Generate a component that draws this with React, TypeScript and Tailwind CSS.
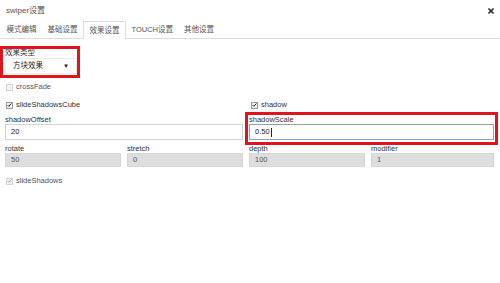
import React from 'react';

const font = { fontFamily: '"Liberation Sans", "Noto Sans CJK SC", Arial, sans-serif' };

const tabs = ['模式编辑', '基础设置', '效果设置', 'TOUCH设置', '其他设置'];

function Check({ checked, disabled, label }: { checked?: boolean; disabled?: boolean; label: string }) {
  return (
    <label className={`flex items-center gap-[3px] h-[10px] ${disabled ? 'text-[#555]' : 'text-[#333]'}`}>
      <span
        className={`w-[7px] h-[7px] border flex items-center justify-center ${
          disabled ? 'border-[#d4d4d4] bg-[#f2f2f2]' : 'border-[#999] bg-[#f4f4f4]'
        }`}
      >
        {checked && (
          <svg width="6" height="6" viewBox="0 0 6 6">
            <path d="M0.8 3.1 L2.3 4.6 L5.2 1.2" fill="none" stroke={disabled ? '#aaa' : '#222'} strokeWidth="1.2" />
          </svg>
        )}
      </span>
      <span>{label}</span>
    </label>
  );
}

function Field({ label, value, disabled, focus }: { label: string; value: string; disabled?: boolean; focus?: boolean }) {
  return (
    <div className="flex flex-col">
      <div className="h-[9px] leading-[9px] text-[#333]">{label}</div>
      <div
        className={`flex items-center px-[5px] border ${
          disabled
            ? 'h-[14px] bg-[#dedede] border-[#d6d6d6] text-[#555]'
            : focus
            ? 'h-[16px] bg-white border-[#8fa3b3] text-[#222]'
            : 'h-[16px] bg-white border-[#cfd4d8] text-[#222]'
        }`}
      >
        {value}
        {focus && <span className="w-px h-[9px] bg-[#222] ml-px" />}
      </div>
    </div>
  );
}

export default function App() {
  return (
    <div className="w-[500px] h-[283px] bg-white text-[7.5px] overflow-hidden" style={font}>
      {/* Title bar */}
      <div className="h-[21px] flex items-center justify-between pl-[6px] pr-[6px] text-[#555] text-[8px]">
        <span>swiper设置</span>
        <svg width="6" height="6" viewBox="0 0 6 6">
          <path d="M0.5 0.5 L5.5 5.5 M5.5 0.5 L0.5 5.5" stroke="#333" strokeWidth="1.6" />
        </svg>
      </div>

      {/* Tabs */}
      <div className="h-[18px] flex items-end pl-[1px] border-b border-[#dddddd]">
        {tabs.map((t, i) => (
          <div
            key={t}
            className={`h-[17px] px-[5.5px] flex items-center text-[#555] ${
              i === 2 ? 'bg-white border border-b-0 border-[#dddddd] -mb-px h-[18px]' : ''
            }`}
          >
            {t}
          </div>
        ))}
      </div>

      <div className="pl-[5px] pr-[6px]">
        {/* Effect type */}
        <div className="relative mt-[9px] w-[72px]">
          <div className="h-[10px] leading-[10px] text-[#333]">效果类型</div>
          <div className="h-[16px] flex items-center justify-between pl-[7px] pr-[7px] border border-[#ececec] text-[#222]">
            <span>方块效果</span>
            <span className="text-[6px]">▼</span>
          </div>
          <div className="absolute -left-[5px] -right-[3px] -top-[2px] -bottom-[4px] border-[3px] border-[#e0141c]" />
        </div>

        <div className="mt-[8px] pl-[1px]">
          <Check disabled label="crossFade" />
        </div>

        <div className="mt-[8px] grid grid-cols-[238px_1fr] gap-x-[7px] pl-[1px]">
          <Check checked label="slideShadowsCube" />
          <Check checked label="shadow" />
        </div>

        <div className="mt-[5px] grid grid-cols-[238px_1fr] gap-x-[6px]">
          <Field label="shadowOffset" value="20" />
          <div className="relative">
            <Field label="shadowScale" value="0.50" focus />
            <div className="absolute -left-[4px] -right-[4px] -top-[3px] -bottom-[5px] border-[3px] border-[#e0141c]" />
          </div>
        </div>

        <div className="mt-[4px] grid grid-cols-[116px_116px_116px_1fr] gap-x-[6px]">
          <Field label="rotate" value="50" disabled />
          <Field label="stretch" value="0" disabled />
          <Field label="depth" value="100" disabled />
          <Field label="modifier" value="1" disabled />
        </div>

        <div className="mt-[9px] pl-[1px]">
          <Check checked disabled label="slideShadows" />
        </div>
      </div>
    </div>
  );
}
